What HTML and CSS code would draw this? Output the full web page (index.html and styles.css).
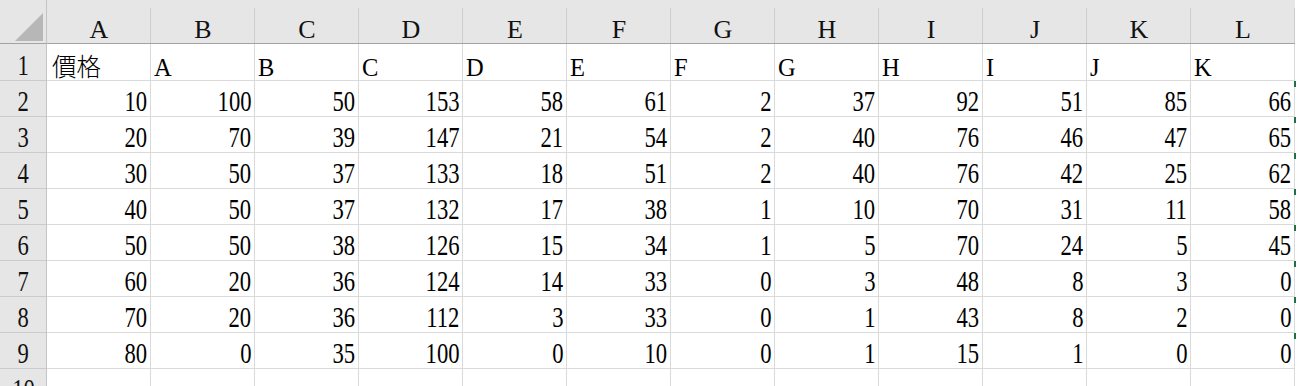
FILE: index.html
```html
<!DOCTYPE html>
<html lang="zh-Hant">
<head>
<meta charset="utf-8">
<title>Sheet</title>
<link rel="stylesheet" href="styles.css">
</head>
<body>
<table class="sheet">
  <colgroup>
    <col class="rh">
    <col class="c"><col class="c"><col class="c"><col class="c"><col class="c"><col class="c">
    <col class="c"><col class="c"><col class="c"><col class="c"><col class="c"><col class="c">
  </colgroup>
  <thead>
    <tr class="hdr">
      <th class="corner"><svg class="tri" width="46" height="43" viewBox="0 0 46 43"><polygon points="15,41 43,13 43,41" fill="#b7b7b7"/></svg></th>
      <th class="col">A</th><th class="col">B</th><th class="col">C</th><th class="col">D</th>
      <th class="col">E</th><th class="col">F</th><th class="col">G</th><th class="col">H</th>
      <th class="col">I</th><th class="col">J</th><th class="col">K</th><th class="col">L</th>
    </tr>
  </thead>
  <tbody>
    <tr class="r1">
      <th class="rn"><span class="n">1</span></th>
      <td class="t"><span class="cjk">價格</span></td>
      <td class="t">A</td><td class="t">B</td><td class="t">C</td><td class="t">D</td>
      <td class="t">E</td><td class="t">F</td><td class="t">G</td><td class="t">H</td>
      <td class="t">I</td><td class="t">J</td><td class="t">K</td>
    </tr>
    <tr>
      <th class="rn"><span class="n">2</span></th>
      <td><span class="n">10</span></td><td><span class="n">100</span></td><td><span class="n">50</span></td><td><span class="n">153</span></td>
      <td><span class="n">58</span></td><td><span class="n">61</span></td><td><span class="n">2</span></td><td><span class="n">37</span></td>
      <td><span class="n">92</span></td><td><span class="n">51</span></td><td><span class="n">85</span></td><td class="mk"><span class="n">66</span></td>
    </tr>
    <tr>
      <th class="rn"><span class="n">3</span></th>
      <td><span class="n">20</span></td><td><span class="n">70</span></td><td><span class="n">39</span></td><td><span class="n">147</span></td>
      <td><span class="n">21</span></td><td><span class="n">54</span></td><td><span class="n">2</span></td><td><span class="n">40</span></td>
      <td><span class="n">76</span></td><td><span class="n">46</span></td><td><span class="n">47</span></td><td class="mk"><span class="n">65</span></td>
    </tr>
    <tr>
      <th class="rn"><span class="n">4</span></th>
      <td><span class="n">30</span></td><td><span class="n">50</span></td><td><span class="n">37</span></td><td><span class="n">133</span></td>
      <td><span class="n">18</span></td><td><span class="n">51</span></td><td><span class="n">2</span></td><td><span class="n">40</span></td>
      <td><span class="n">76</span></td><td><span class="n">42</span></td><td><span class="n">25</span></td><td class="mk"><span class="n">62</span></td>
    </tr>
    <tr>
      <th class="rn"><span class="n">5</span></th>
      <td><span class="n">40</span></td><td><span class="n">50</span></td><td><span class="n">37</span></td><td><span class="n">132</span></td>
      <td><span class="n">17</span></td><td><span class="n">38</span></td><td><span class="n">1</span></td><td><span class="n">10</span></td>
      <td><span class="n">70</span></td><td><span class="n">31</span></td><td><span class="n">11</span></td><td class="mk"><span class="n">58</span></td>
    </tr>
    <tr>
      <th class="rn"><span class="n">6</span></th>
      <td><span class="n">50</span></td><td><span class="n">50</span></td><td><span class="n">38</span></td><td><span class="n">126</span></td>
      <td><span class="n">15</span></td><td><span class="n">34</span></td><td><span class="n">1</span></td><td><span class="n">5</span></td>
      <td><span class="n">70</span></td><td><span class="n">24</span></td><td><span class="n">5</span></td><td class="mk"><span class="n">45</span></td>
    </tr>
    <tr>
      <th class="rn"><span class="n">7</span></th>
      <td><span class="n">60</span></td><td><span class="n">20</span></td><td><span class="n">36</span></td><td><span class="n">124</span></td>
      <td><span class="n">14</span></td><td><span class="n">33</span></td><td><span class="n">0</span></td><td><span class="n">3</span></td>
      <td><span class="n">48</span></td><td><span class="n">8</span></td><td><span class="n">3</span></td><td class="mk"><span class="n">0</span></td>
    </tr>
    <tr>
      <th class="rn"><span class="n">8</span></th>
      <td><span class="n">70</span></td><td><span class="n">20</span></td><td><span class="n">36</span></td><td><span class="n">112</span></td>
      <td><span class="n">3</span></td><td><span class="n">33</span></td><td><span class="n">0</span></td><td><span class="n">1</span></td>
      <td><span class="n">43</span></td><td><span class="n">8</span></td><td><span class="n">2</span></td><td class="mk"><span class="n">0</span></td>
    </tr>
    <tr>
      <th class="rn"><span class="n">9</span></th>
      <td><span class="n">80</span></td><td><span class="n">0</span></td><td><span class="n">35</span></td><td><span class="n">100</span></td>
      <td><span class="n">0</span></td><td><span class="n">10</span></td><td><span class="n">0</span></td><td><span class="n">1</span></td>
      <td><span class="n">15</span></td><td><span class="n">1</span></td><td><span class="n">0</span></td><td class="mk"><span class="n">0</span></td>
    </tr>
    <tr>
      <th class="rn"><span class="n">10</span></th>
      <td></td><td></td><td></td><td></td><td></td><td></td>
      <td></td><td></td><td></td><td></td><td></td><td></td>
    </tr>
  </tbody>
</table>
</body>
</html>
```
FILE: styles.css
```css
html, body {
  margin: 0;
  padding: 0;
  background: #ffffff;
  overflow: hidden;
}

body {
  font-family: "Liberation Serif", "Noto Sans CJK TC", serif;
  color: #000000;
}

.sheet {
  border-collapse: separate;
  border-spacing: 0;
  table-layout: fixed;
  width: 1295px;
}

.sheet col.rh { width: 47px; }
.sheet col.c { width: 104px; }

.sheet th,
.sheet td {
  padding: 0;
  box-sizing: border-box;
  white-space: nowrap;
  vertical-align: bottom;
  font-weight: normal;
}

/* column header row */
.hdr { height: 44px; }

.hdr th {
  background: #e6e6e6;
  border-bottom: 1px solid #a3a3a3;
  font-size: 26px;
  line-height: 26px;
  text-align: center;
  color: #111111;
}

.hdr th.col {
  background:
    linear-gradient(#cdcdcd, #cdcdcd) no-repeat right 8px / 1px calc(100% - 8px),
    #e6e6e6;
}

.hdr th.corner {
  border-right: 1px solid #c4c4c4;
  vertical-align: top;
}

.tri { display: block; }

/* body rows */
tbody tr { height: 36px; }
tbody tr.r1 { height: 37px; }

.rn {
  background: #e6e6e6;
  border-right: 1px solid #c4c4c4;
  border-bottom: 1px solid #cbcbcb;
  text-align: center;
  font-size: 29px;
  line-height: 29px;
  color: #111111;
}

.sheet td {
  border-right: 1px solid #dadada;
  border-bottom: 1px solid #dadada;
  text-align: right;
  padding-right: 3px;
  font-size: 29px;
  line-height: 29px;
}

.sheet td.t {
  text-align: left;
  padding-left: 3px;
  padding-right: 0;
  font-size: 24.5px;
  line-height: 25px;
}

.cjk {
  font-family: "Noto Sans CJK TC", "Noto Sans CJK SC", sans-serif;
  font-size: 24.5px;
  font-weight: 300;
  padding-left: 2px;
}

/* condensed tall digits */
.n {
  display: inline-block;
  transform: scaleX(0.78);
  transform-origin: 100% 50%;
}

.rn .n { transform-origin: 50% 50%; }

/* copy marquee marks on the right edge of column L */
.sheet td.mk { position: relative; }

.sheet td.mk::after {
  content: "";
  position: absolute;
  right: -2px;
  top: 0;
  width: 2px;
  height: 6px;
  background: #1e7145;
}
```
